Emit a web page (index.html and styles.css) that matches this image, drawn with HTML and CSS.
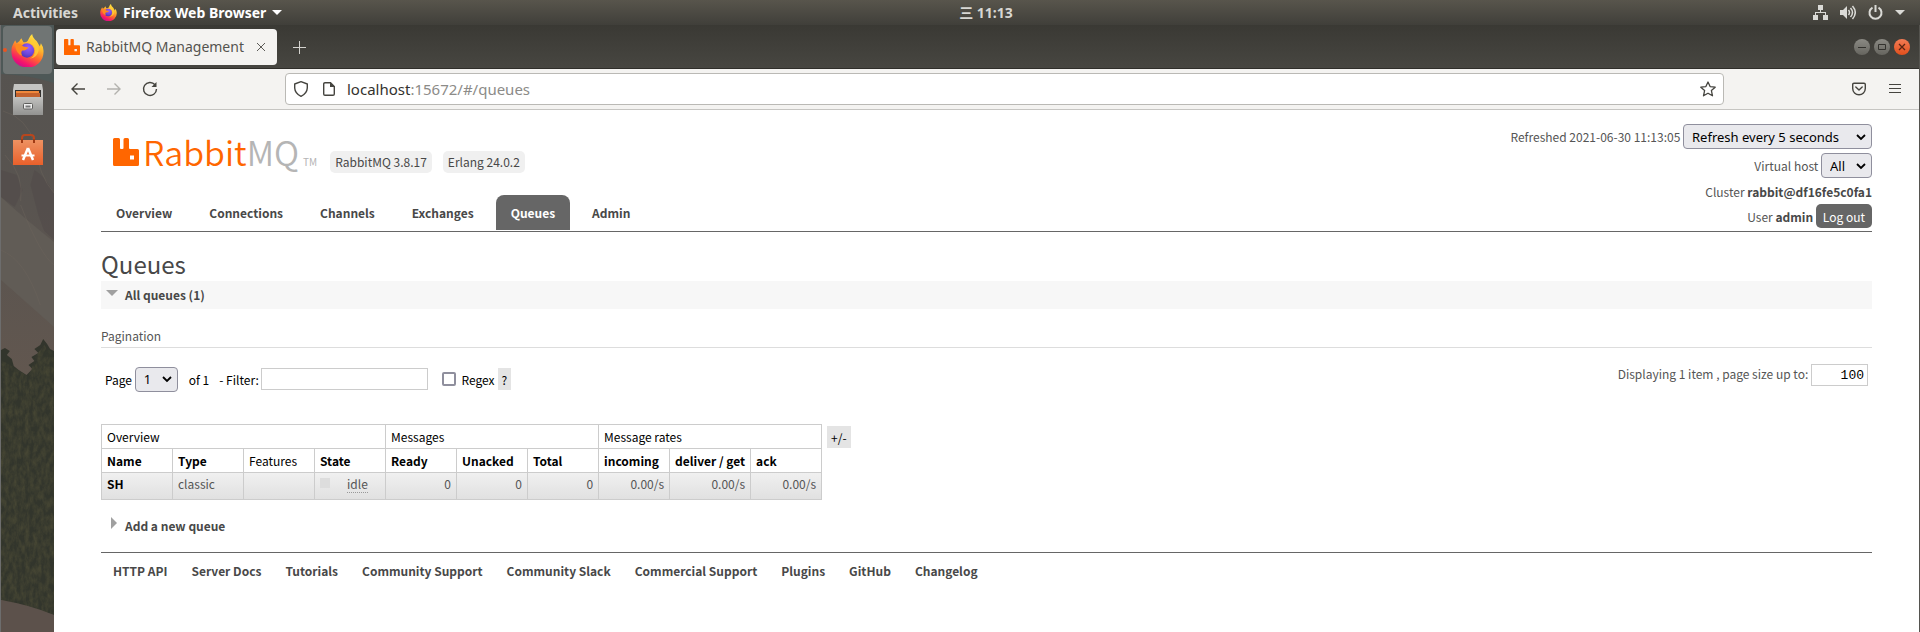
FILE: index.html
```html
<!DOCTYPE html>
<html lang="en">
<head>
<meta charset="utf-8">
<title>RabbitMQ Management</title>
<link rel="stylesheet" href="styles.css">
</head>
<body>
<svg class="defs" aria-hidden="true">
  <defs>
    <linearGradient id="flame" x1="0.8" y1="0" x2="0.3" y2="1">
      <stop offset="0" stop-color="#fff04a"/><stop offset="0.35" stop-color="#ffb62d"/>
      <stop offset="0.6" stop-color="#ff6a2c"/><stop offset="0.85" stop-color="#f5156c"/><stop offset="1" stop-color="#c60f8e"/>
    </linearGradient>
    <radialGradient id="globe" cx="0.6" cy="0.3" r="0.8">
      <stop offset="0" stop-color="#9a5cff"/><stop offset="0.6" stop-color="#6a45d8"/><stop offset="1" stop-color="#4a2fa8"/>
    </radialGradient>
    <symbol id="firefox" viewBox="0 0 32 32">
      <path fill="url(#flame)" d="M2 10 4 6 5.500 9 8 7 10 4 12 8C15 8 16 7.500 17 5Q18 2 20.500 0Q21 4 25 7L28 12 29 9Q32 13 31.500 18A15.500 14.500 0 0 1 .500 18Q0 13 2 10Z"/>
      <circle cx="15.500" cy="16" r="7" fill="url(#globe)"/>
      <path fill="#ff8a1f" d="M4 11Q8 8 12 12L17 13Q15 16 11 16Q9 18 11 21Q5 20 4 11Z"/>
      <path fill="#ffce35" d="M18 9Q23 10 23.500 16Q23 22 18 24Q26 23 27 15Q26 9 20 4Z" opacity="0.8"/>
    </symbol>
    <symbol id="rabbit" viewBox="0 0 26 28">
      <path d="M1.500 0H5.500Q7 0 7 1.500V10Q7 11 8 11H9.500Q10.500 11 10.500 10V1.500Q10.500 0 12 0H14.500Q16 0 16 1.500V10Q16 11 17 11H24.500Q26 11 26 12.500V26.500Q26 28 24.500 28H1.500Q0 28 0 26.500V1.500Q0 0 1.500 0ZM17 17.500V21.500H21V17.500Z" fill="#f60" fill-rule="evenodd"/>
    </symbol>
    <linearGradient id="steel" x1="0" y1="0" x2="0" y2="1"><stop offset="0" stop-color="#c2c2c0"/><stop offset="1" stop-color="#929290"/></linearGradient>
    <linearGradient id="bag" x1="0" y1="0" x2="0" y2="1"><stop offset="0" stop-color="#ee9262"/><stop offset="1" stop-color="#e9602b"/></linearGradient>
  </defs>
</svg>

<header class="topbar">
  <div class="topbar-left">
    <span class="activities">Activities</span>
    <span class="app-menu"><svg width="17" height="17"><use href="#firefox"/></svg>Firefox Web Browser<i class="caret"></i></span>
  </div>
  <div class="clock">三 11:13</div>
  <div class="tray">
    <svg width="15" height="15" viewBox="0 0 15 15"><path d="M5 0h5v5H5zM0 10h5v5H0zM10 10h5v5h-5zM7 5h1v2h5v3h-1V8H3v2H2V7h5z" fill="#dadad6"/></svg>
    <svg width="16" height="15" viewBox="0 0 16 15"><path d="M0 5h3l4-4v13l-4-4H0z" fill="#dadad6"/><path d="M8.500 5q2 2.500 0 5M10.500 3q4 4.500 0 9M12.500 1q5.500 6.500 0 13" fill="none" stroke="#dadad6" stroke-width="1.500"/></svg>
    <svg width="15" height="15" viewBox="0 0 15 15"><path d="M4.500 2.600a6 6 0 1 0 6 0M7.500 0v7" fill="none" stroke="#dadad6" stroke-width="2"/></svg>
    <i class="caret"></i>
  </div>
</header>

<div class="desktop">
  <aside class="dock">
    <svg class="wallpaper" viewBox="0 0 54 607" preserveAspectRatio="none" aria-hidden="true">
      <defs>
        <filter id="leaves" x="0" y="0" width="1" height="1" color-interpolation-filters="sRGB"><feTurbulence type="fractalNoise" baseFrequency="0.240 0.120" numOctaves="4" seed="4"/><feColorMatrix values="0 0 0 0 .27  0 0 0 0 .27  0 0 0 0 .2  2 0 0 0 -.6"/><feComposite operator="in" in2="SourceGraphic"/></filter>
        <linearGradient id="rock" x1="0" y1="0" x2="0" y2="1"><stop offset="0" stop-color="#555350"/><stop offset="0.3" stop-color="#595450"/><stop offset="0.6" stop-color="#62574f"/><stop offset="1" stop-color="#5b524d"/></linearGradient>
      </defs>
      <path fill="url(#rock)" d="M0 0H54V607H0z"/>
      <path fill="#4e5857" d="M0 0H54V58Q30 50 0 49z"/>
      <path fill="#615c56" d="M0 172Q20 190 54 217V302Q22 274 0 255z"/>
      <path fill="#514b49" d="M34 145Q44 150 54 168V215L44 206 38 190 30 160z" opacity="0.600"/>
      <path fill="#514b49" d="M0 145 16 150 22 165 14 182 0 172z" opacity="0.600"/>
      <path fill="none" stroke="#6c635c" stroke-width="1" opacity="0.500" d="M2 86Q26 92 35 120Q38 150 54 168M4 130Q24 150 20 176M20 180Q40 230 54 240M0 225Q25 235 40 280"/>
      <path fill="#32352c" d="M0 325 4 323 9 326 6 330 11 334 13 341 18 345 26 350 32 344 28 340 34 336 31 332 38 328 34 324 40 320 43 314 47 319 50 324 54 326V590L0 575z"/>
      <path fill="#000" filter="url(#leaves)" d="M0 335 11 341 28 352 36 330 44 320 54 330V590L0 575z"/>
      <path fill="#5c514b" d="M0 575Q30 580 54 590V607H0z"/>
    </svg>
    <div class="dock-items">
      <span class="dock-item active"><svg width="33" height="33"><use href="#firefox"/></svg></span>
      <span class="dock-item"><svg width="32" height="32" viewBox="0 0 32 32"><path d="M2 0H30L31 6V31H1V6z" fill="#c4c4c2"/><path d="M3 6H29V14H3z" fill="#33302e"/><path d="M4 7H27V10H4z" fill="#f0883c"/><path d="M4 9H28V13H4z" fill="#c4622e"/><path d="M1 13H31V31H1z" fill="url(#steel)"/><rect x="11.500" y="19.500" width="9" height="5.500" rx="1" fill="#eee" stroke="#5e5e5c"/><path d="M13.500 21.500h5v2h-5z" fill="#777"/></svg></span>
      <span class="dock-item"><svg width="32" height="32" viewBox="0 0 32 32"><path d="M10 7V4Q10 1 13 1H19Q22 1 22 4V7" fill="none" stroke="#b8461d" stroke-width="2"/><path d="M1 6H31V31H1z" fill="url(#bag)"/><path d="M10 5v4M22 5v4" stroke="#a03a14" stroke-width="2"/><path d="M16 14 11 26M16 14l5 12" stroke="#fff" stroke-width="2.500" fill="none"/><path d="M9.500 21.500h13" stroke="#fff" stroke-width="2"/></svg></span>
    </div>
  </aside>

  <div class="browser">
    <div class="tabstrip">
      <div class="tab"><svg width="16" height="16" viewBox="0 0 26 28" preserveAspectRatio="none"><use href="#rabbit"/></svg><span class="tab-title">RabbitMQ Management</span><button class="plain" aria-label="Close tab"><svg width="8" height="8" viewBox="0 0 8 8"><path d="M0 0l8 8M8 0l-8 8" stroke="#5c5b57"/></svg></button></div>
      <button class="plain new-tab" aria-label="New tab"><svg width="13" height="13" viewBox="0 0 13 13"><path d="M6.500 0v13M0 6.500h13" stroke="#d4d3cf"/></svg></button>
      <div class="window-buttons">
        <button class="wb" aria-label="Minimize"><svg width="16" height="16" viewBox="0 0 16 16"><path d="M4 8.500h8" stroke="#33322e"/></svg></button>
        <button class="wb" aria-label="Maximize"><svg width="16" height="16" viewBox="0 0 16 16"><path d="M4.500 5.500h7v5h-7z" stroke="#33322e" fill="none"/></svg></button>
        <button class="wb close" aria-label="Close"><svg width="16" height="16" viewBox="0 0 16 16"><path d="M5 5l6 6M11 5l-6 6" stroke="#5a2412" stroke-width="1.300"/></svg></button>
      </div>
    </div>
    <div class="toolbar">
      <div class="nav-buttons">
        <button class="plain" aria-label="Back"><svg width="16" height="16" viewBox="0 0 16 16"><path d="M15 8H2M7.500 2.500 2 8l5.500 5.500" fill="none" stroke="#45443f" stroke-width="1.400"/></svg></button>
        <button class="plain" aria-label="Forward"><svg width="16" height="16" viewBox="0 0 16 16"><path d="M1 8h13M8.500 2.500 14 8l-5.500 5.500" fill="none" stroke="#b3b2ae" stroke-width="1.400"/></svg></button>
        <button class="plain" aria-label="Reload"><svg width="16" height="16" viewBox="0 0 16 16"><path d="M13 3.800A6.500 6.500 0 1 0 14.500 8" fill="none" stroke="#45443f" stroke-width="1.400"/><path d="M14.500 1v5h-5z" fill="#45443f"/></svg></button>
      </div>
      <div class="urlbar">
        <svg width="16" height="16" viewBox="0 0 16 16"><path d="M8 .700 14.300 3V7Q14 12.500 8 15.300Q2 12.500 1.700 7V3z" fill="none" stroke="#45443f" stroke-width="1.400" stroke-linejoin="round"/></svg>
        <svg class="doc" width="12" height="14" viewBox="0 0 12 14"><path d="M7.500.700H2Q.700.700.700 2V12Q.700 13.300 2 13.300H10Q11.300 13.300 11.300 12V4.500z" fill="none" stroke="#45443f" stroke-width="1.400"/><path d="M7 0v5h5z" fill="#45443f"/></svg>
        <a class="url" href="#/queues"><b>localhost</b>:15672/#/queues</a>
        <button class="plain" aria-label="Bookmark"><svg width="16" height="16" viewBox="0 0 16 16"><path d="M8 1 10.100 5.600 15.200 6.200 11.400 9.600 12.500 14.800 8 12.200 3.500 14.800 4.600 9.600.800 6.200 5.900 5.600z" fill="none" stroke="#45443f" stroke-width="1.300" stroke-linejoin="round"/></svg></button>
      </div>
      <div class="tool-buttons">
        <button class="plain" aria-label="Pocket"><svg width="14" height="14" viewBox="0 0 14 14"><path d="M2 1.200H12Q13.300 1.200 13.300 2.500V6.500A6.300 6.300 0 0 1 .700 6.500V2.500Q.700 1.200 2 1.200zM3.800 5 7 8l3.200-3" fill="none" stroke="#45443f" stroke-width="1.400" stroke-linejoin="round" stroke-linecap="round"/></svg></button>
        <button class="plain" aria-label="Menu"><svg width="12" height="12" viewBox="0 0 12 12"><path d="M0 1.500h12M0 5.500h12M0 9.500h12" stroke="#45443f" stroke-width="1.200"/></svg></button>
      </div>
    </div>

    <main class="page">
      <div class="head">
        <div>
          <div class="brand">
            <svg width="26" height="28"><use href="#rabbit"/></svg>
            <span class="wordmark">Rabbit<span>MQ</span></span><span class="tm">TM</span>
            <span class="badge">RabbitMQ 3.8.17</span>
            <span class="badge">Erlang 24.0.2</span>
          </div>
          <nav class="tabs">
            <a href="#/">Overview</a><a href="#/connections">Connections</a><a href="#/channels">Channels</a><a href="#/exchanges">Exchanges</a><a class="selected" href="#/queues">Queues</a><a href="#/users">Admin</a>
          </nav>
        </div>
        <div class="status">
          <label>Refreshed 2021-06-30 11:13:05 <select class="sel refresh"><option>Refresh every 5 seconds</option></select></label>
          <label>Virtual host <select class="sel vhost"><option>All</option></select></label>
          <div class="cluster">Cluster <b>rabbit@df16fe5c0fa1</b></div>
          <div class="user">User <b>admin</b> <button class="logout">Log out</button></div>
        </div>
      </div>

      <h1>Queues</h1>
      <h2 class="section open"><i class="tri down"></i>All queues (1)</h2>
      <h3>Pagination</h3>
      <div class="pager">
        <div class="pager-left">
          <label>Page <select class="sel pagenum"><option>1</option></select></label>
          <span class="of">of 1</span>
          <label class="filter">- Filter: <input type="text" class="box"></label>
          <label class="regex"><input type="checkbox">Regex</label>
          <button class="help">?</button>
        </div>
        <label class="size">Displaying 1 item , page size up to: <input type="text" class="box num" value="100"></label>
      </div>

      <div class="list">
        <table>
          <colgroup><col><col><col><col><col><col><col><col><col class="wide"><col></colgroup>
          <thead>
            <tr><th class="light" colspan="4">Overview</th><th class="light" colspan="3">Messages</th><th class="light" colspan="3">Message rates</th></tr>
            <tr><th>Name</th><th>Type</th><th class="light">Features</th><th>State</th><th>Ready</th><th>Unacked</th><th>Total</th><th>incoming</th><th>deliver / get</th><th>ack</th></tr>
          </thead>
          <tbody>
            <tr><td><a href="#/queues/SH">SH</a></td><td>classic</td><td></td><td><div class="state"><i></i><abbr>idle</abbr></div></td><td class="r">0</td><td class="r">0</td><td class="r">0</td><td class="r">0.00/s</td><td class="r">0.00/s</td><td class="r">0.00/s</td></tr>
          </tbody>
        </table>
        <button class="help plusminus">+/-</button>
      </div>

      <h2 class="section"><i class="tri right"></i>Add a new queue</h2>
      <footer>
        <a href="#api">HTTP API</a><a href="#docs">Server Docs</a><a href="#tut">Tutorials</a><a href="#cs">Community Support</a><a href="#slack">Community Slack</a><a href="#com">Commercial Support</a><a href="#plugins">Plugins</a><a href="#gh">GitHub</a><a href="#log">Changelog</a>
      </footer>
    </main>
  </div>
</div>
</body>
</html>
```
FILE: styles.css
```css
* { box-sizing: border-box; }
body { margin: 0; min-height: 100vh; display: flex; flex-direction: column; background: #fff; color: #484848; font: 12px/17px "Noto Sans CJK SC", "Noto Sans", sans-serif; }
svg { display: block; flex: none; }
.defs { width: 0; height: 0; position: absolute; }
a { color: inherit; text-decoration: none; }
button, input, select { font: inherit; color: inherit; margin: 0; }
.plain { border: 0; padding: 0; background: none; display: block; }

.topbar { height: 25px; display: grid; grid-template-columns: 1fr auto 1fr; align-items: center; padding: 0 15px 0 13px; background: linear-gradient(#58554c, #403f3a); color: #fff; font: bold 14px/24px "Noto Sans", "Noto Sans CJK SC", sans-serif; }
.topbar-left, .app-menu, .tray { display: flex; align-items: center; }
.topbar-left { gap: 22px; }
.activities, .clock { color: #d8d7d3; }
.clock { padding-left: 54px; }
.app-menu { gap: 6px; }
.caret { border: 5px solid transparent; border-top-color: currentColor; border-bottom: 0; }
.tray { justify-content: flex-end; gap: 12px; color: #dadad6; }

.desktop { flex: 1; display: flex; }
.dock { position: relative; width: 54px; border-left: 1px solid #6d6d6d; overflow: hidden; background: #4a4742; }
.wallpaper { position: absolute; inset: 0; width: 100%; height: 100%; }
.dock-items { position: relative; padding: 1px 2px; display: flex; flex-direction: column; gap: 2px; }
.dock-item { height: 48px; border-radius: 4px; display: flex; align-items: center; justify-content: center; }
.dock-item.active { background: #707574; }
.dock-item.active::before { content: ""; position: absolute; left: 2px; width: 4px; height: 4px; border-radius: 2px; background: #e95420; }

.browser { flex: 1; min-width: 0; display: flex; flex-direction: column; background: #fff; border-right: 1px solid #55544f; }
.tabstrip { height: 44px; display: flex; align-items: center; padding: 1px 9px 0 2px; background: linear-gradient(#3a3934, #474641); border-bottom: 1px solid #2f2e2a; }
.tab { height: 36px; width: 221px; display: flex; align-items: center; gap: 6px; padding: 0 12px 0 8px; background: #f4f3f1; border-radius: 4px; color: #55544f; font: 14px/20px "Noto Sans", sans-serif; }
.tab-title { flex: 1; white-space: nowrap; }
.new-tab { margin-left: 16px; }
.window-buttons { margin-left: auto; display: flex; gap: 4px; }
.wb { width: 16px; height: 16px; border: 0; border-radius: 50%; padding: 0; background: linear-gradient(#8b8a84, #66655f); }
.wb.close { background: linear-gradient(#f47c55, #e14f1c); }
.toolbar { height: 41px; display: flex; align-items: center; padding: 0 18px 0 16px; background: #f4f3f1; border-bottom: 1px solid #c6c5c2; }
.nav-buttons { display: flex; gap: 20px; width: 215px; }
.urlbar { flex: 1; height: 32px; display: flex; align-items: center; padding: 0 7px; background: #fff; border: 1px solid #bab9b5; border-radius: 4px; color: #8c8b88; font: 15px/20px "Noto Sans", sans-serif; }
.doc { margin: 0 12px 0 14px; }
.url { flex: 1; }
.url b { font-weight: normal; color: #33322e; }
.tool-buttons { width: 177px; display: flex; align-items: center; justify-content: flex-end; gap: 23px; }

.page { padding: 0 47px; }
.head { display: flex; justify-content: space-between; border-bottom: 1px solid #666; }
.brand { display: flex; padding: 28px 0 0 12px; height: 85px; }
.wordmark { margin: 0 4px; color: #f60; font-size: 34px; font-weight: 350; line-height: 28px; }
.wordmark span { color: #b5b5b5; }
.tm { color: #b5b5b5; font-size: 10px; line-height: 48px; margin-right: 13px; }
.badge { height: 22px; margin: 13px 11px 0 0; padding: 2px 5px; border-radius: 5px; background: #f0f0f0; }
.tabs { display: flex; gap: 7px; padding-bottom: 1px; }
.tabs a { padding: 9px 15px; font-weight: bold; border-radius: 8px 8px 0 0; }
.tabs a.selected { background: #666; color: #fff; }
.status { padding-top: 14px; display: flex; flex-direction: column; align-items: flex-end; gap: 4px; color: #555; }
.status b { color: #484848; }
.sel { appearance: none; height: 25px; padding: 0 8px; border: 1px solid #8f8f9d; border-radius: 4px; color: #000; font: 13px/20px "Noto Sans", sans-serif; background: #e9e9ed url("data:image/svg+xml,%3Csvg xmlns='http://www.w3.org/2000/svg' width='10' height='8'%3E%3Cpath d='M1 2l4 4 4-4' fill='none' stroke='%23000' stroke-width='1.800'/%3E%3C/svg%3E") no-repeat right 5px center; }
.refresh { width: 189px; }
.vhost { width: 51px; }
.cluster { padding: 1px 0 0; }
.logout { height: 24px; padding: 0 7px; border: 0; border-radius: 5px; background: #666; color: #fff; }

h1 { margin: 15px 0 0; font-size: 24px; line-height: 34px; font-weight: normal; color: #484848; }
h2.section { margin: 0; height: 28px; display: flex; align-items: center; padding-bottom: 2px; font-size: 12px; line-height: 17px; }
.open { background: #f7f7f7; }
.tri { width: 19px; margin-left: 5px; height: 12px; }
.tri::before { content: ""; display: block; width: 0; border: 6px solid transparent; }
.tri.down::before { border-top-color: #a0a0a0; border-bottom: 0; margin-top: 2px; }
.tri.right::before { border-left-color: #a0a0a0; border-right: 0; margin: -2px 0 0 5px; }
h3 { margin: 18px 0 0; padding-bottom: 3px; font-size: 12px; font-weight: normal; color: #555; border-bottom: 1px solid #ddd; }
.pager { display: flex; justify-content: space-between; padding: 16px 4px 0; }
.pager-left { display: flex; align-items: center; height: 30px; color: #000; }
.pagenum { width: 43px; }
.of { margin: 0 10px 0 11px; }
.box { width: 167px; height: 22px; padding: 0 3px; border: 1px solid #ccc; background: #fff; }
.regex { display: flex; align-items: center; margin: 0 3px 0 14px; gap: 5px; }
.regex input { appearance: none; width: 14px; height: 14px; border: 2px solid #8f8f9d; border-radius: 2px; background: #fff; }
.help { height: 22px; padding: 0 4px; border: 0; background: #e4e4e4; color: #000; }
.num { width: 57px; text-align: right; color: #000; font: 13px/18px "Liberation Mono", monospace; }
.size { color: #555; }

.list { display: flex; align-items: flex-start; margin: 30px 0 12px; gap: 5px; }
table { border-collapse: collapse; table-layout: fixed; width: 721px; }
col { width: 71px; }
.wide { width: 81px; }
th, td { border: 1px solid #ccc; padding: 3px 5px; height: 24px; text-align: left; white-space: nowrap; }
th { color: #000; }
th.light { font-weight: normal; }
td { height: 27px; padding-top: 2px; color: #555; vertical-align: top; }
td a { font-weight: bold; color: #000; }
tbody tr { background: linear-gradient(#f0f0f0, #e0e0e0); }
.r { text-align: right; }
.state { display: flex; gap: 17px; }
.state i { width: 10px; height: 10px; margin-top: 3px; background: #ddd; }
.state abbr { border-bottom: 1px dotted #999; }
.plusminus { margin-top: 2px; padding: 0 4px; }
footer { display: flex; gap: 24px; margin-top: 12px; padding: 9px 12px; border-top: 1px solid #666; font-weight: bold; }
```
